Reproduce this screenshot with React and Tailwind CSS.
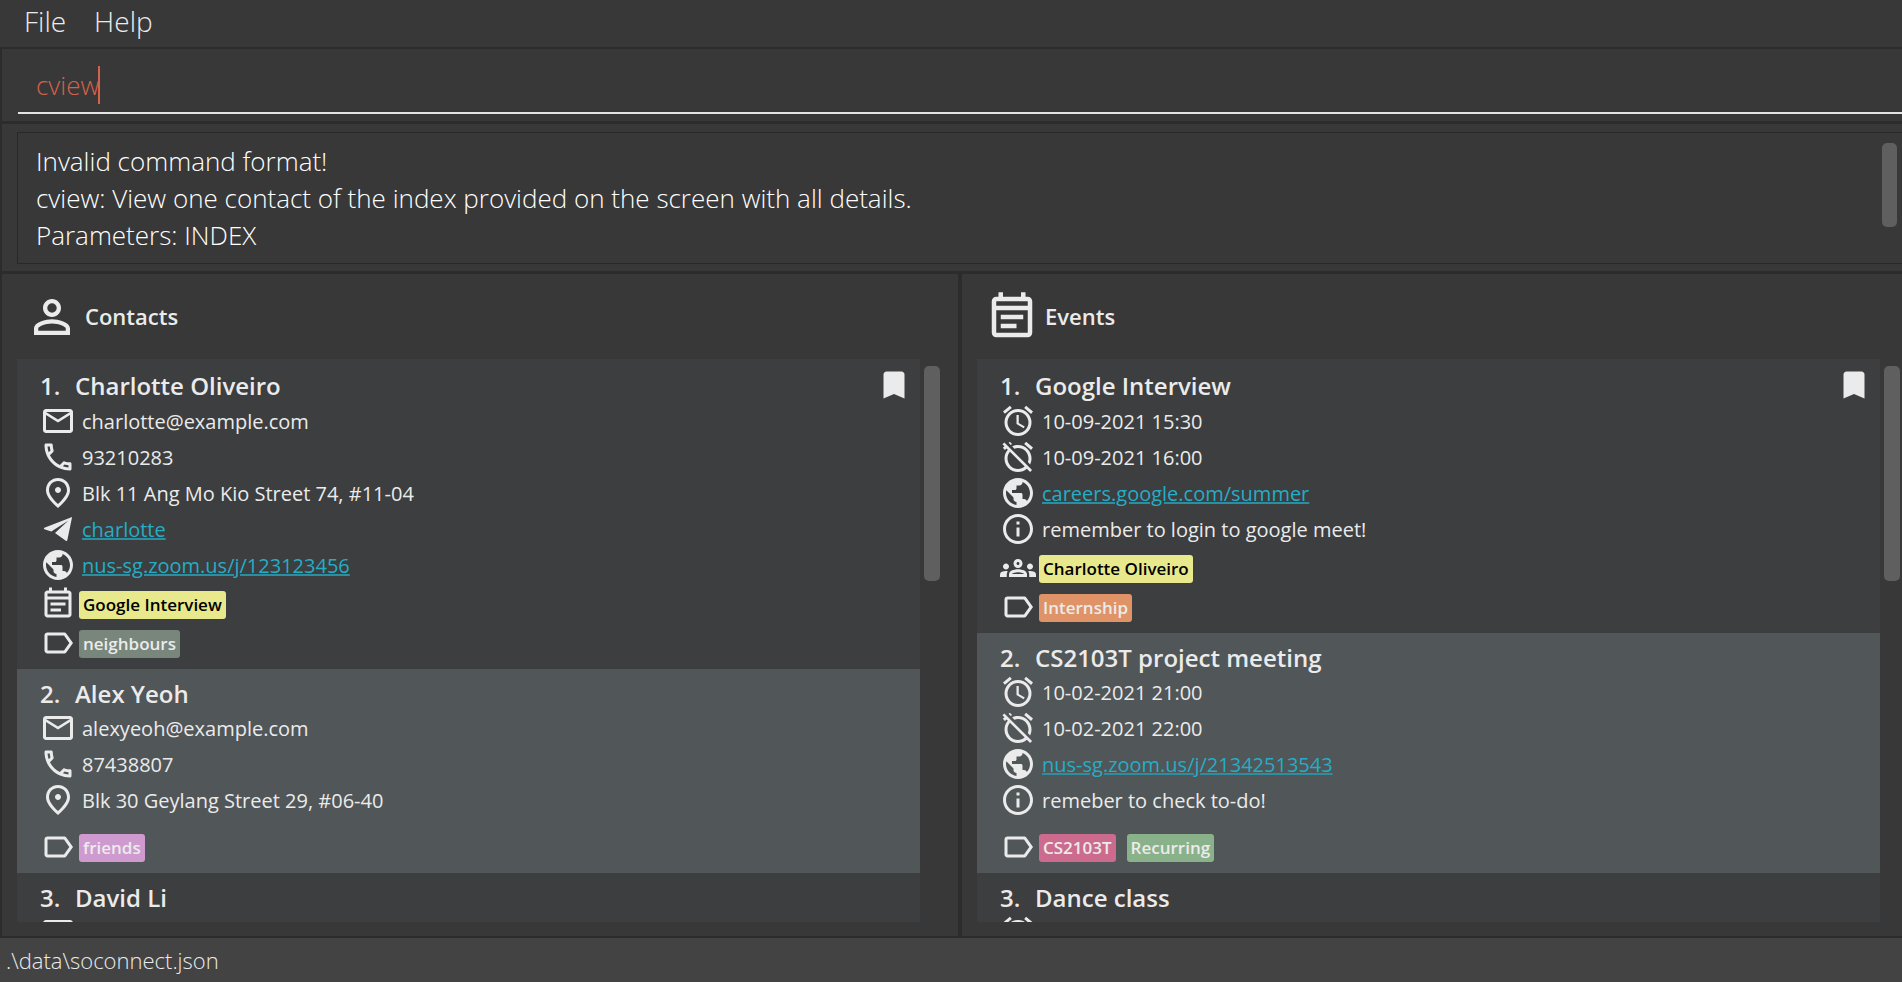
import React from "react";
import {
  MdMailOutline,
  MdOutlinePhone,
  MdOutlinePlace,
  MdPublic,
  MdOutlineEventNote,
  MdLabelOutline,
  MdAlarm,
  MdAlarmOff,
  MdInfoOutline,
  MdOutlineGroups,
  MdBookmark,
  MdPersonOutline,
} from "react-icons/md";

function TelegramIcon({ className }) {
  return (
    <svg viewBox="0 0 24 24" fill="currentColor" className={className} aria-hidden="true">
      <path d="M21.4 4 2.9 11.2c-.4.2-.4.7 0 .9l4.6 1.6L19 6.3 10 14.6l7.2 5.3c.4.3.9.1 1-.4z" />
    </svg>
  );
}

const contacts = [
  {
    name: "Charlotte Oliveiro",
    bookmarked: true,
    rows: [
      { Icon: MdMailOutline, text: "charlotte@example.com" },
      { Icon: MdOutlinePhone, text: "93210283" },
      { Icon: MdOutlinePlace, text: "Blk 11 Ang Mo Kio Street 74, #11-04" },
      { Icon: TelegramIcon, text: "charlotte", href: "#charlotte" },
      { Icon: MdPublic, text: "nus-sg.zoom.us/j/123123456", href: "#zoom" },
    ],
    links: { Icon: MdOutlineEventNote, items: ["Google Interview"] },
    tags: [{ text: "neighbours", color: "bg-[#78867c]" }],
  },
  {
    name: "Alex Yeoh",
    rows: [
      { Icon: MdMailOutline, text: "alexyeoh@example.com" },
      { Icon: MdOutlinePhone, text: "87438807" },
      { Icon: MdOutlinePlace, text: "Blk 30 Geylang Street 29, #06-40" },
    ],
    tags: [{ text: "friends", color: "bg-[#cf9acf]" }],
  },
  {
    name: "David Li",
    rows: [{ Icon: MdMailOutline, text: "" }],
    tags: [],
  },
];

const events = [
  {
    name: "Google Interview",
    bookmarked: true,
    rows: [
      { Icon: MdAlarm, text: "10-09-2021 15:30" },
      { Icon: MdAlarmOff, text: "10-09-2021 16:00" },
      { Icon: MdPublic, text: "careers.google.com/summer", href: "#careers" },
      { Icon: MdInfoOutline, text: "remember to login to google meet!" },
    ],
    links: { Icon: MdOutlineGroups, items: ["Charlotte Oliveiro"] },
    tags: [{ text: "Internship", color: "bg-[#df9367]" }],
  },
  {
    name: "CS2103T project meeting",
    rows: [
      { Icon: MdAlarm, text: "10-02-2021 21:00" },
      { Icon: MdAlarmOff, text: "10-02-2021 22:00" },
      { Icon: MdPublic, text: "nus-sg.zoom.us/j/21342513543", href: "#zoom" },
      { Icon: MdInfoOutline, text: "remeber to check to-do!" },
    ],
    tags: [
      { text: "CS2103T", color: "bg-[#cc6b8e]" },
      { text: "Recurring", color: "bg-[#8ab28a]" },
    ],
  },
  {
    name: "Dance class",
    rows: [{ Icon: MdAlarm, text: "" }],
    tags: [],
  },
];

function Chip({ className, children }) {
  return (
    <span className={`h-7 rounded-[3px] px-1 text-[17px] leading-7 font-semibold whitespace-nowrap ${className}`}>
      {children}
    </span>
  );
}

function ChipRow({ Icon, className, children }) {
  return (
    <div className={`flex items-start gap-[3px] ${className}`}>
      <Icon className="size-9 shrink-0" />
      <div className="flex flex-wrap gap-[11px] pt-[5px]">{children}</div>
    </div>
  );
}

function Card({ index, entry }) {
  return (
    <li className="bg-[#3c3e3f] py-2 pr-2 pl-[23px] even:bg-[#515658]">
      <div className="flex items-center">
        <h3 className="flex flex-1 text-2xl leading-[33px] font-semibold">
          <span className="w-[35px]">{index}.</span>
          <span>{entry.name}</span>
        </h3>
        {entry.bookmarked && <MdBookmark className="size-9 shrink-0" />}
      </div>
      {entry.rows.map(({ Icon, text, href }) => (
        <div key={text} className="flex h-9 items-center gap-[6px] text-xl">
          <Icon className="size-9 shrink-0" />
          {href ? (
            <a
              href={href}
              className="pt-0.5 text-[#25adc6] underline decoration-[#2b8fa1] decoration-2 underline-offset-1"
            >
              {text}
            </a>
          ) : (
            <span className="pt-0.5">{text}</span>
          )}
        </div>
      ))}
      {entry.links && (
        <ChipRow Icon={entry.links.Icon} className="mt-[3px]">
          {entry.links.items.map((item) => (
            <Chip key={item} className="bg-[#e8e98c] text-black">
              {item}
            </Chip>
          ))}
        </ChipRow>
      )}
      <ChipRow Icon={MdLabelOutline} className={entry.links ? "mt-[3px]" : "mt-[11px]"}>
        {entry.tags.map((tag) => (
          <Chip key={tag.text} className={tag.color}>
            {tag.text}
          </Chip>
        ))}
      </ChipRow>
    </li>
  );
}

function Panel({ title, Icon, entries, className }) {
  return (
    <section className={`flex min-h-0 min-w-0 flex-col border-2 border-t-0 border-[#2c2c2c] pb-3.5 pl-[15px] ${className}`}>
      <header className="flex items-center gap-[6px] px-2 pt-4 pb-[15px]">
        <Icon className="size-[54px]" />
        <h2 className="pb-0.5 text-[22px] font-semibold">{title}</h2>
      </header>
      <div className="flex min-h-0 flex-1 gap-1">
        <ul className="min-w-0 flex-1 overflow-y-auto [scrollbar-width:none]">
          {entries.map((entry, i) => (
            <Card key={entry.name} index={i + 1} entry={entry} />
          ))}
        </ul>
        <div className="w-4 pt-[7px]">
          <div className="h-[215px] rounded-[5px] bg-[#5f5f5f]" />
        </div>
      </div>
    </section>
  );
}

export default function App() {
  return (
    <div className="flex h-screen flex-col overflow-hidden bg-[#383838] font-['Open_Sans',sans-serif] text-[#ebebeb]">
      <nav className="flex h-[47px] shrink-0 items-start gap-7 px-6 pt-[2px] text-[28px] leading-[38px] font-light">
        <button type="button">File</button>
        <button type="button">Help</button>
      </nav>

      <div className="relative shrink-0 border-2 border-r-0 border-b-3 border-[#2c2c2c] pt-[14px] pb-[7px] pl-4">
        <input
          id="command"
          type="text"
          aria-label="Command"
          defaultValue="cview"
          spellCheck={false}
          className="block h-[51px] w-full border-b-2 border-[#e4e4e4] bg-transparent pb-[6px] pl-[18px] text-[26px] font-light text-[#d5614b] caret-transparent outline-none"
        />
        <span aria-hidden="true" className="absolute top-[17px] left-[96px] h-[38px] w-[2px] bg-[#d5614b]" />
      </div>

      <div className="shrink-0 border-2 border-t-0 border-r-0 border-b-3 border-[#2c2c2c] pt-2 pb-[7px] pl-[15px]">
        <div className="flex border-y border-l border-[#282828] pr-[5px]">
          <textarea
            id="result"
            aria-label="Result"
            readOnly
            rows={3}
            spellCheck={false}
            defaultValue={
              "Invalid command format!\ncview: View one contact of the index provided on the screen with all details.\nParameters: INDEX"
            }
            className="block h-[130px] flex-1 resize-none overflow-hidden bg-transparent pt-[10px] pl-[18px] text-[26px] leading-[37px] font-light text-white outline-none"
          />
          <div className="w-[15px] pt-[10px]">
            <div className="h-[84px] rounded-[5px] bg-[#5f5f5f]" />
          </div>
        </div>
      </div>

      <main className="grid min-h-0 flex-1 grid-cols-[960fr_942fr] grid-rows-[minmax(0,1fr)]">
        <Panel title="Contacts" Icon={MdPersonOutline} entries={contacts} className="pr-[18px]" />
        <Panel title="Events" Icon={MdOutlineEventNote} entries={events} className="border-r-0 pr-[2px]" />
      </main>

      <footer className="flex h-11 shrink-0 items-center bg-[#434343] px-[6px] text-[22px] font-light">
        .\data\soconnect.json
      </footer>
    </div>
  );
}
